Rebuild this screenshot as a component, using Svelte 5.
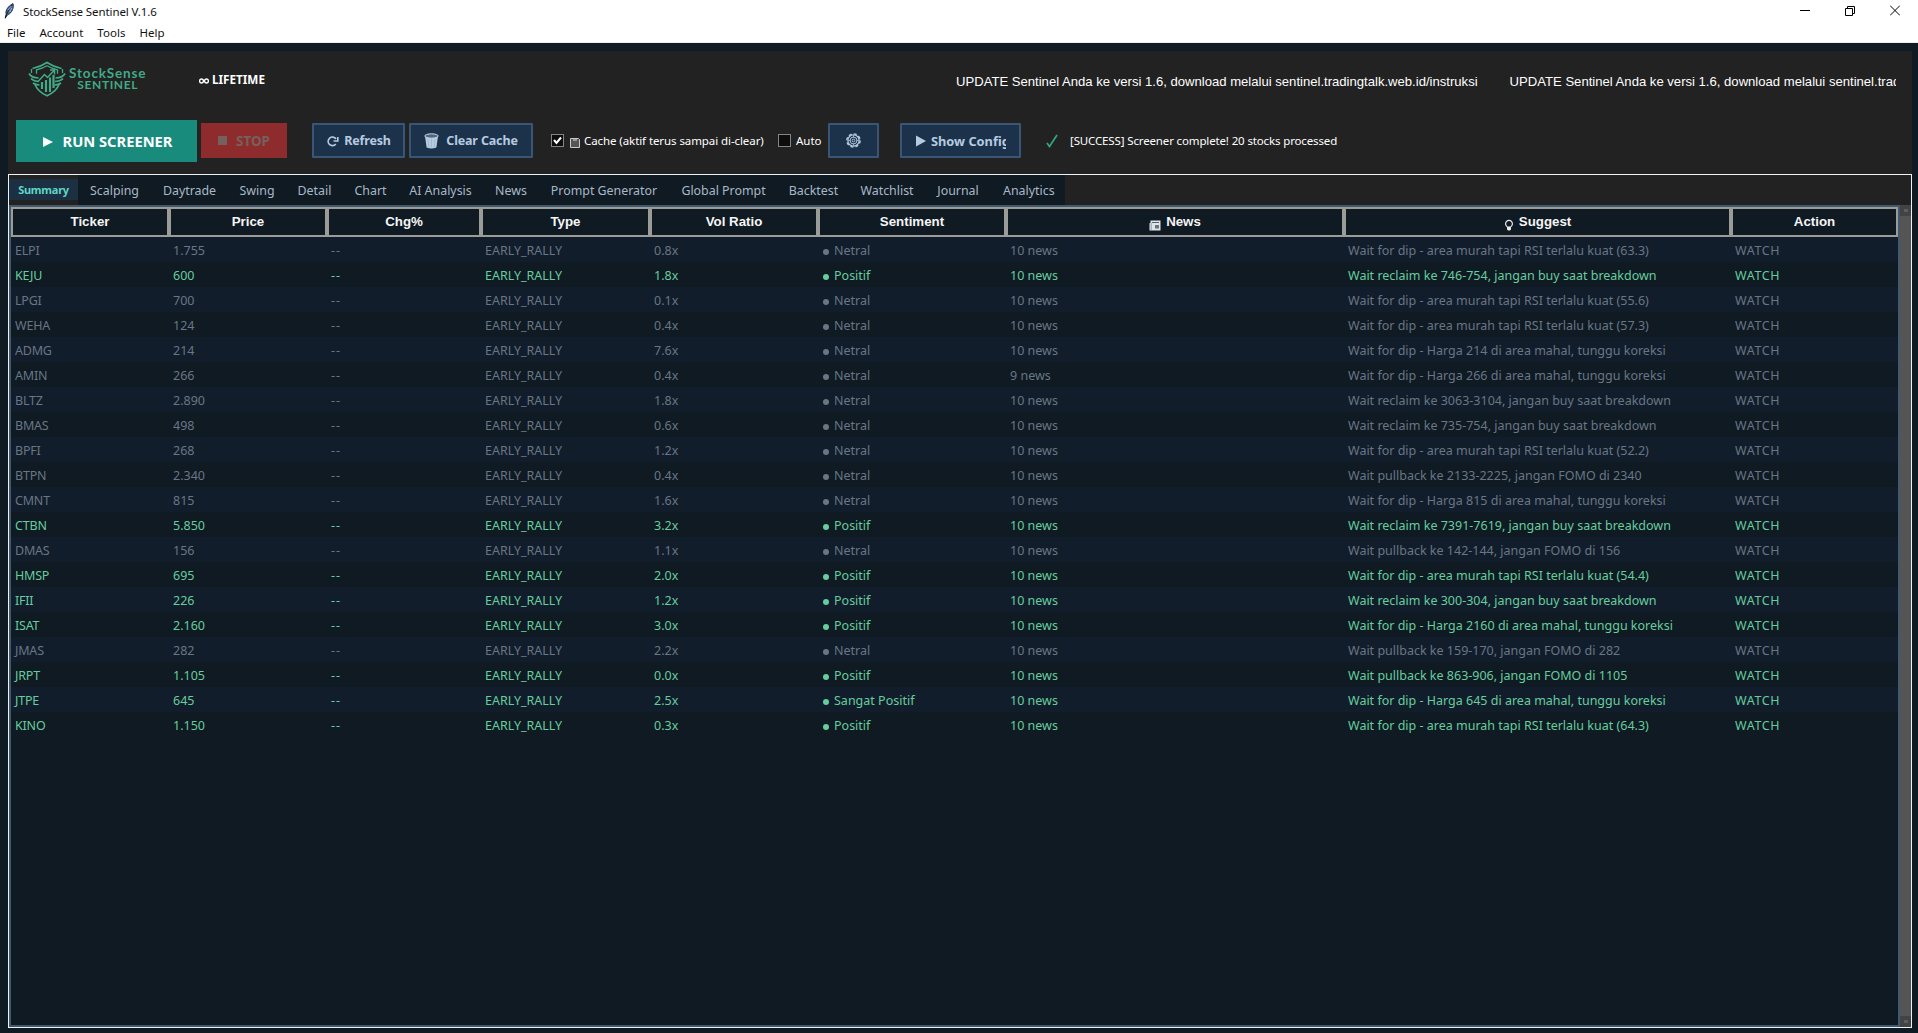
<script lang="ts">
  const menus = ["File", "Account", "Tools", "Help"];

  const tabs = [
    { name: "Summary", width: 69 },
    { name: "Scalping", width: 73 },
    { name: "Daytrade", width: 77 },
    { name: "Swing", width: 58 },
    { name: "Detail", width: 57 },
    { name: "Chart", width: 55 },
    { name: "AI Analysis", width: 85 },
    { name: "News", width: 56 },
    { name: "Prompt Generator", width: 130 },
    { name: "Global Prompt", width: 109 },
    { name: "Backtest", width: 71 },
    { name: "Watchlist", width: 76 },
    { name: "Journal", width: 66 },
    { name: "Analytics", width: 74 },
  ];
  let activeTab = $state("Summary");

  const columns = ["Ticker", "Price", "Chg%", "Type", "Vol Ratio", "Sentiment", "News", "Suggest", "Action"];

  const data: [string, string, string, string, string][] = [
    ["ELPI", "1.755", "0.8x", "Netral", "Wait for dip - area murah tapi RSI terlalu kuat (63.3)"],
    ["KEJU", "600", "1.8x", "Positif", "Wait reclaim ke 746-754, jangan buy saat breakdown"],
    ["LPGI", "700", "0.1x", "Netral", "Wait for dip - area murah tapi RSI terlalu kuat (55.6)"],
    ["WEHA", "124", "0.4x", "Netral", "Wait for dip - area murah tapi RSI terlalu kuat (57.3)"],
    ["ADMG", "214", "7.6x", "Netral", "Wait for dip - Harga 214 di area mahal, tunggu koreksi"],
    ["AMIN", "266", "0.4x", "Netral", "Wait for dip - Harga 266 di area mahal, tunggu koreksi"],
    ["BLTZ", "2.890", "1.8x", "Netral", "Wait reclaim ke 3063-3104, jangan buy saat breakdown"],
    ["BMAS", "498", "0.6x", "Netral", "Wait reclaim ke 735-754, jangan buy saat breakdown"],
    ["BPFI", "268", "1.2x", "Netral", "Wait for dip - area murah tapi RSI terlalu kuat (52.2)"],
    ["BTPN", "2.340", "0.4x", "Netral", "Wait pullback ke 2133-2225, jangan FOMO di 2340"],
    ["CMNT", "815", "1.6x", "Netral", "Wait for dip - Harga 815 di area mahal, tunggu koreksi"],
    ["CTBN", "5.850", "3.2x", "Positif", "Wait reclaim ke 7391-7619, jangan buy saat breakdown"],
    ["DMAS", "156", "1.1x", "Netral", "Wait pullback ke 142-144, jangan FOMO di 156"],
    ["HMSP", "695", "2.0x", "Positif", "Wait for dip - area murah tapi RSI terlalu kuat (54.4)"],
    ["IFII", "226", "1.2x", "Positif", "Wait reclaim ke 300-304, jangan buy saat breakdown"],
    ["ISAT", "2.160", "3.0x", "Positif", "Wait for dip - Harga 2160 di area mahal, tunggu koreksi"],
    ["JMAS", "282", "2.2x", "Netral", "Wait pullback ke 159-170, jangan FOMO di 282"],
    ["JRPT", "1.105", "0.0x", "Positif", "Wait pullback ke 863-906, jangan FOMO di 1105"],
    ["JTPE", "645", "2.5x", "Sangat Positif", "Wait for dip - Harga 645 di area mahal, tunggu koreksi"],
    ["KINO", "1.150", "0.3x", "Positif", "Wait for dip - area murah tapi RSI terlalu kuat (64.3)"],
  ];
  const rows = data.map(([ticker, price, vol, sentiment, suggest]) => ({
    ticker,
    price,
    vol,
    sentiment,
    suggest,
    news: ticker === "AMIN" ? "9 news" : "10 news",
  }));

  const update = "UPDATE Sentinel Anda ke versi 1.6, download melalui sentinel.tradingtalk.web.id/instruksi";
  let cache = $state(true);
  let auto = $state(false);
</script>

<div class="window">
  <header class="titlebar">
    <svg class="feather" viewBox="0 0 12 16" width="12" height="16">
      <path d="M1.2 15 2.2 11C1 8 4 3 9 .6 10 4 8.500 10 3.500 11.800Z" fill="#4d6c9c" stroke="#18243a" stroke-width=".9" />
      <path d="M1.200 15.500C3 10 5 6 8 2" fill="none" stroke="#10141c" stroke-width=".8" />
      <path d="M4 7 7.500 3M5.500 9 8 5" stroke="#b5cdea" stroke-width=".8" />
    </svg>
    <span class="app-title">StockSense Sentinel V.1.6</span>
    <div class="controls">
      <svg viewBox="0 0 10 11" width="10" height="11"><path d="M0 5.500h10" stroke="#000" /></svg>
      <svg viewBox="0 0 10 11" width="10" height="11">
        <path d="M.5 3.500h7v7h-7zM2.500 3.500v-2h7v7h-2" fill="none" stroke="#000" />
      </svg>
      <svg viewBox="0 0 10 11" width="10" height="11"><path d="m0 .5 10 10m0-10-10 10" stroke="#000" /></svg>
    </div>
  </header>
  <nav class="menubar">
    {#each menus as menu}
      <span>{menu}</span>
    {/each}
  </nav>

  <main>
    <section class="banner">
      <div class="logo">
        <svg viewBox="0 0 38 36" width="38" height="36" fill="none" stroke="#41aa86" stroke-width="1.700">
          <path d="M4.500 7.500C9.500 6.500 14.500 4.500 19 1.500c4.500 3 9.500 5 14.500 6" />
          <path d="M3.500 8v4M34.500 8v4M19 4.800C15.500 7 12 8 8.500 8.800v4M19 4.800c3.500 2.200 7 3.200 10.500 4v4" stroke-width="1.300" />
          <path d="M1 12.500c2 3.500 5 4.500 9.500 4.500M3 17.500c2 2 4.500 3 8 3M5 22c2 1.500 4 2 6.500 2M37 12.500c-2 3.500-5 4.500-9.500 4.500M35 17.500c-2 2-4.500 3-8 3M33 22c-2 1.500-4 2-6.500 2" />
          <path d="M7 23.500C9 29 14 32.500 19 34.800c5-2.300 10-5.800 12-11.300" />
          <path d="M14 28v-7M18 31V19M22 31V16.500M25.500 27V14" stroke-width="2.200" />
          <path d="m10.500 20 6-6.500 3 3L26 9.500M22 9h4.500v4.500" stroke-width="1.500" />
        </svg>
        <div class="wordmark">
          <span>StockSense</span>
          <span class="sub">SENTINEL</span>
        </div>
      </div>
      <strong class="plan"><svg viewBox="0 0 10 6" width="10" height="6"><path d="M5 3C4 1.500 3.500 1 2.600 1a2 2 0 0 0 0 4C3.500 5 4 4.500 5 3s1.500-2 2.400-2a2 2 0 0 1 0 4C6.500 5 6 4.500 5 3Z" fill="none" stroke="#fff" stroke-width="1.400" /></svg> LIFETIME</strong>
      <div class="marquee">
        <span>{update}</span>
        <span>{update}</span>
      </div>
    </section>

    <section class="toolbar">
      <button class="run">
        <svg viewBox="0 0 10 10" width="10" height="10"><path d="M0 0 10 5 0 10Z" fill="#fff" /></svg>
        <span>RUN SCREENER</span>
      </button>
      <button class="stop"><i></i><span>STOP</span></button>
      <button class="tool refresh">
        <svg viewBox="0 0 13 12" width="13" height="12" fill="none" stroke="#b5cbe0" stroke-width="1.600">
          <path d="M9.800 9A4.300 4.300 0 1 1 10 4M11.800 2v4H7.500" />
        </svg>
        <span>Refresh</span>
      </button>
      <button class="tool clear">
        <svg viewBox="0 0 15 16" width="15" height="16">
          <path d="M1 3 2.600 14.500Q7.500 16.500 12.400 14.500L14 3Z" fill="#b5cbe0" />
          <ellipse cx="7.500" cy="3" rx="6.700" ry="2.200" fill="#52677e" stroke="#c6d8e8" />
          <path d="m4 6 .7 8M7.500 6v8M11 6l-.7 8" stroke="#94acc2" stroke-width=".6" />
        </svg>
        <span>Clear Cache</span>
      </button>
      <label class="check cache">
        <input type="checkbox" bind:checked={cache} />
        <span class="box">
          {#if cache}
            <svg viewBox="0 0 11 11" width="11" height="11"><path d="m2 5 2.500 3L9 2.500" fill="none" stroke="#fff" stroke-width="2" /></svg>
          {/if}
        </span>
        <svg class="disk" viewBox="0 0 10 10" width="10" height="10">
          <path d="M.5.5h8l1 1v8h-9z" fill="#555" stroke="#c9c9c9" />
          <path d="M3 1v2h4V1" fill="#999" />
        </svg>
        <span class="text">Cache (aktif terus sampai di-clear)</span>
      </label>
      <label class="check auto">
        <input type="checkbox" bind:checked={auto} />
        <span class="box">
          {#if auto}
            <svg viewBox="0 0 11 11" width="11" height="11"><path d="m2 5 2.500 3L9 2.500" fill="none" stroke="#fff" stroke-width="2" /></svg>
          {/if}
        </span>
        <span class="text">Auto</span>
      </label>
      <button class="tool gear" aria-label="settings">
        <svg viewBox="0 0 16 16" width="15" height="15" fill="none" stroke="#b5cbe0">
          <circle cx="8" cy="8" r="6" stroke-width="1.300" />
          <circle cx="8" cy="8" r="7.100" stroke-width="1.500" stroke-dasharray="3.300 2.280" />
          <circle cx="8" cy="8" r="3.700" stroke-width="1" />
          <circle cx="8" cy="8" r="1.500" />
          <path d="M8 2.500v2.300M8 11.200v2.300M2.500 8h2.300M11.200 8h2.300" stroke-width=".8" />
        </svg>
      </button>
      <button class="tool config">
        <svg viewBox="0 0 10 12" width="10" height="12"><path d="M0 .5 10 6 0 11.500Z" fill="#b5cbe0" /></svg>
        <span>Show Config</span>
      </button>
      <svg class="tick" viewBox="0 0 12 14" width="12" height="14">
        <path d="m1 9 2.500 3.500L11 1" fill="none" stroke="#2faa78" stroke-width="1.700" />
      </svg>
      <span class="status">[SUCCESS] Screener complete! 20 stocks processed</span>
    </section>

    <section class="notebook">
      <div class="tabs">
        {#each tabs as tab}
          <button
            class="tab"
            class:active={tab.name === activeTab}
            style="width: {tab.width}px"
            onclick={() => (activeTab = tab.name)}
          >
            <span>{tab.name}</span>
          </button>
        {/each}
      </div>
      <div class="body">
        <div class="tree">
          <div class="row head">
            {#each columns as column}
              <div>
                {#if column === "News"}
                  <svg viewBox="0 0 12 11" width="12" height="11">
                    <path d="M1.500.5H11.500V10.500H.5V3H1.500Z" fill="#dfe4e8" />
                    <path d="M3 2.500h7" stroke="#59636d" />
                    <path d="M6 5h4v3.500H6z" fill="#69747e" />
                    <path d="M2.200 3v7" stroke="#727d87" stroke-width=".7" />
                  </svg>
                {:else if column === "Suggest"}
                  <svg viewBox="0 0 10 12" width="10" height="12">
                    <path d="M3.300 7.700A3.400 3.400 0 1 1 6.700 7.700" fill="none" stroke="#e8edf0" stroke-width="1.200" />
                    <path d="M3 7.500h4v3L5.800 11.500H4.200L3 10.500Z" fill="#e8edf0" />
                  </svg>
                {/if}
                <span>{column}</span>
              </div>
            {/each}
          </div>
          {#each rows as row}
            <div class="row" class:positive={row.sentiment !== "Netral"}>
              <span class="ticker">{row.ticker}</span>
              <span>{row.price}</span>
              <span class="change">--</span>
              <span>EARLY_RALLY</span>
              <span>{row.vol}</span>
              <span class="sentiment"><i></i>{row.sentiment}</span>
              <span>{row.news}</span>
              <span>{row.suggest}</span>
              <span class="action">WATCH</span>
            </div>
          {/each}
        </div>
        <div class="scrollbar"><i></i><i></i></div>
      </div>
    </section>
  </main>
</div>

<style>
  :global(body) {
    margin: 0;
    overflow: hidden;
  }
  .window {
    width: 1918px;
    height: 1033px;
    display: flex;
    flex-direction: column;
    background: #0f1a23;
    font-family: "Noto Sans", "Open Sans", sans-serif;
    font-size: 12px;
    white-space: nowrap;
    overflow: hidden;
  }
  svg {
    flex: none;
  }
  button {
    font: inherit;
    padding: 0;
    margin: 0;
    box-sizing: border-box;
    display: flex;
    align-items: center;
    justify-content: center;
    flex: none;
  }
  .titlebar {
    display: flex;
    align-items: center;
    height: 22px;
    padding-left: 4px;
    background: #fff;
    color: #111;
  }
  .app-title {
    margin-left: 7px;
    font-size: 11.5px;
    letter-spacing: -0.1px;
  }
  .controls {
    display: flex;
    margin-left: auto;
    gap: 35px;
    padding-right: 18px;
    padding-bottom: 2px;
  }
  .menubar {
    display: flex;
    align-items: center;
    gap: 14px;
    height: 20px;
    padding-left: 7px;
    background: #fff;
    border-bottom: 1px solid #e9f0f0;
    color: #111;
    font-size: 11.5px;
    letter-spacing: 0.02px;
  }
  main {
    margin: 8px 6px 5px 8px;
    flex: 1;
    display: flex;
    flex-direction: column;
    background: #222;
    min-height: 0;
  }
  .banner {
    display: flex;
    height: 69px;
    color: #fff;
  }
  .logo {
    display: flex;
    flex: none;
    width: 171px;
    padding: 10px 0 0 20px;
    color: #41aa86;
  }
  .wordmark {
    display: flex;
    flex-direction: column;
    align-items: center;
    margin: 6px 0 0 3px;
    font-family: Lato, sans-serif;
    font-weight: 700;
    font-size: 13.5px;
    line-height: 12px;
    letter-spacing: 0.85px;
  }
  .sub {
    font-size: 12px;
    line-height: 11px;
    letter-spacing: 0.6px;
  }
  .plan {
    flex: none;
    width: 757px;
    padding-top: 20px;
    line-height: 16px;
    font-size: 11.7px;
  }
  .marquee {
    display: flex;
    flex: none;
    gap: 32px;
    width: 940px;
    height: 20px;
    margin-top: 20px;
    line-height: 21px;
    overflow: hidden;
    font-family: "Liberation Sans", Arial, sans-serif;
    font-size: 13.1px;
  }
  .toolbar {
    display: flex;
    align-items: center;
    height: 42px;
    padding: 0 0 12px 8px;
    color: #fff;
  }
  .toolbar > :not(.run) {
    margin-bottom: 1px;
  }
  .run {
    width: 181px;
    height: 42px;
    gap: 10px;
    padding-left: 2px;
    border: none;
    background: #198b7d;
    color: #fff;
    font-weight: 700;
    font-size: 14.7px;
  }
  .run span {
    margin-bottom: 1px;
  }
  .run svg {
    margin-top: 2px;
  }
  .stop {
    width: 86px;
    height: 35px;
    margin: 0 25px 0 4px;
    gap: 9px;
    border: none;
    background: #8e2c2d;
    color: #75605d;
    font-weight: 700;
    font-size: 13.5px;
  }
  .stop i {
    width: 9px;
    height: 9px;
    background: #75605d;
  }
  .tool {
    height: 35px;
    border: 2px solid #395676;
    background: #1c324a;
    color: #b5cbe0;
    font-weight: 700;
    font-size: 12.5px;
    letter-spacing: -0.15px;
    border-radius: 1px;
  }
  .refresh {
    width: 93px;
    gap: 5px;
  }
  .clear {
    width: 124px;
    margin-left: 4px;
    gap: 7px;
  }
  .check {
    display: flex;
    align-items: center;
    font-size: 11.5px;
    letter-spacing: -0.08px;
  }
  .check input {
    display: none;
  }
  .box {
    width: 11px;
    height: 11px;
    border: 1px solid #858585;
    background: #0d0d0d;
  }
  .box svg {
    display: block;
  }
  .cache {
    width: 227px;
    margin-left: 18px;
  }
  .disk {
    margin: 4px 4px 0 6px;
  }
  .auto {
    width: 50px;
  }
  .auto .text {
    margin-left: 5px;
    letter-spacing: 0;
  }
  .gear {
    width: 51px;
  }
  .config {
    width: 121px;
    margin-left: 21px;
    padding-left: 14px;
    padding-right: 13px;
    gap: 5px;
    justify-content: flex-start;
    font-size: 12.8px;
    letter-spacing: 0;
  }
  .config span {
    overflow: hidden;
  }
  .tick {
    margin: 0 12px 0 25px;
  }
  .status {
    font-size: 11.5px;
    letter-spacing: -0.14px;
  }
  .notebook {
    flex: 1;
    display: flex;
    flex-direction: column;
    min-height: 0;
    border: 1px solid #edf2f5;
  }
  .tabs {
    display: flex;
    height: 30px;
    flex: none;
  }
  .tab {
    height: 30px;
    padding-top: 1px;
    border: none;
    background: #0f1a23;
    color: #a9b8c6;
    font-size: 12.4px;
  }
  .tab:last-child {
    justify-content: flex-start;
    padding-left: 12px;
  }
  .tab.active {
    height: 21px;
    margin-top: 4px;
    padding-top: 0;
    background: #1c3043;
    color: #5fd6c6;
    font-weight: 700;
    font-size: 11px;
    letter-spacing: -0.25px;
  }
  .body {
    flex: 1;
    display: flex;
    min-height: 0;
  }
  .tree {
    width: 1887px;
    border: 2px solid #41586d;
    background: #0f1a23;
  }
  .row {
    display: grid;
    grid-template-columns: 158px 158px 154px 169px 168px 188px 338px 387px 167px;
    height: 25px;
    line-height: 27px;
    color: #687685;
    font-size: 12.5px;
  }
  .row:nth-child(even) {
    background: #121d2b;
  }
  .row > span {
    padding-left: 4px;
  }
  .row.positive {
    color: #66cd9e;
  }
  .row.head {
    height: 30px;
    color: #f5f5f5;
    font-family: "Liberation Sans", Arial, sans-serif;
    font-weight: 700;
    font-size: 13.3px;
    line-height: 24px;
  }
  .head > div {
    display: flex;
    align-items: center;
    justify-content: center;
    gap: 5px;
    border: 2px solid #9b9c98;
  }
  .head svg {
    margin-top: 6px;
  }
  .row .ticker {
    letter-spacing: -0.2px;
  }
  .row .change {
    letter-spacing: 1px;
  }
  .row .action {
    letter-spacing: 0.6px;
  }
  .row .sentiment {
    padding-left: 5px;
  }
  .sentiment i {
    display: inline-block;
    width: 6px;
    height: 6px;
    margin-right: 5px;
    border-radius: 50%;
    background: currentColor;
  }
  .scrollbar {
    flex: 1;
    display: flex;
    flex-direction: column;
    justify-content: space-between;
    background: #555;
  }
  .scrollbar i {
    display: flex;
    align-items: center;
    justify-content: center;
    height: 11px;
    background: #414344;
  }
  .scrollbar i::after {
    content: "";
    width: 4px;
    height: 3px;
    background: #5b5d5e;
  }
</style>
